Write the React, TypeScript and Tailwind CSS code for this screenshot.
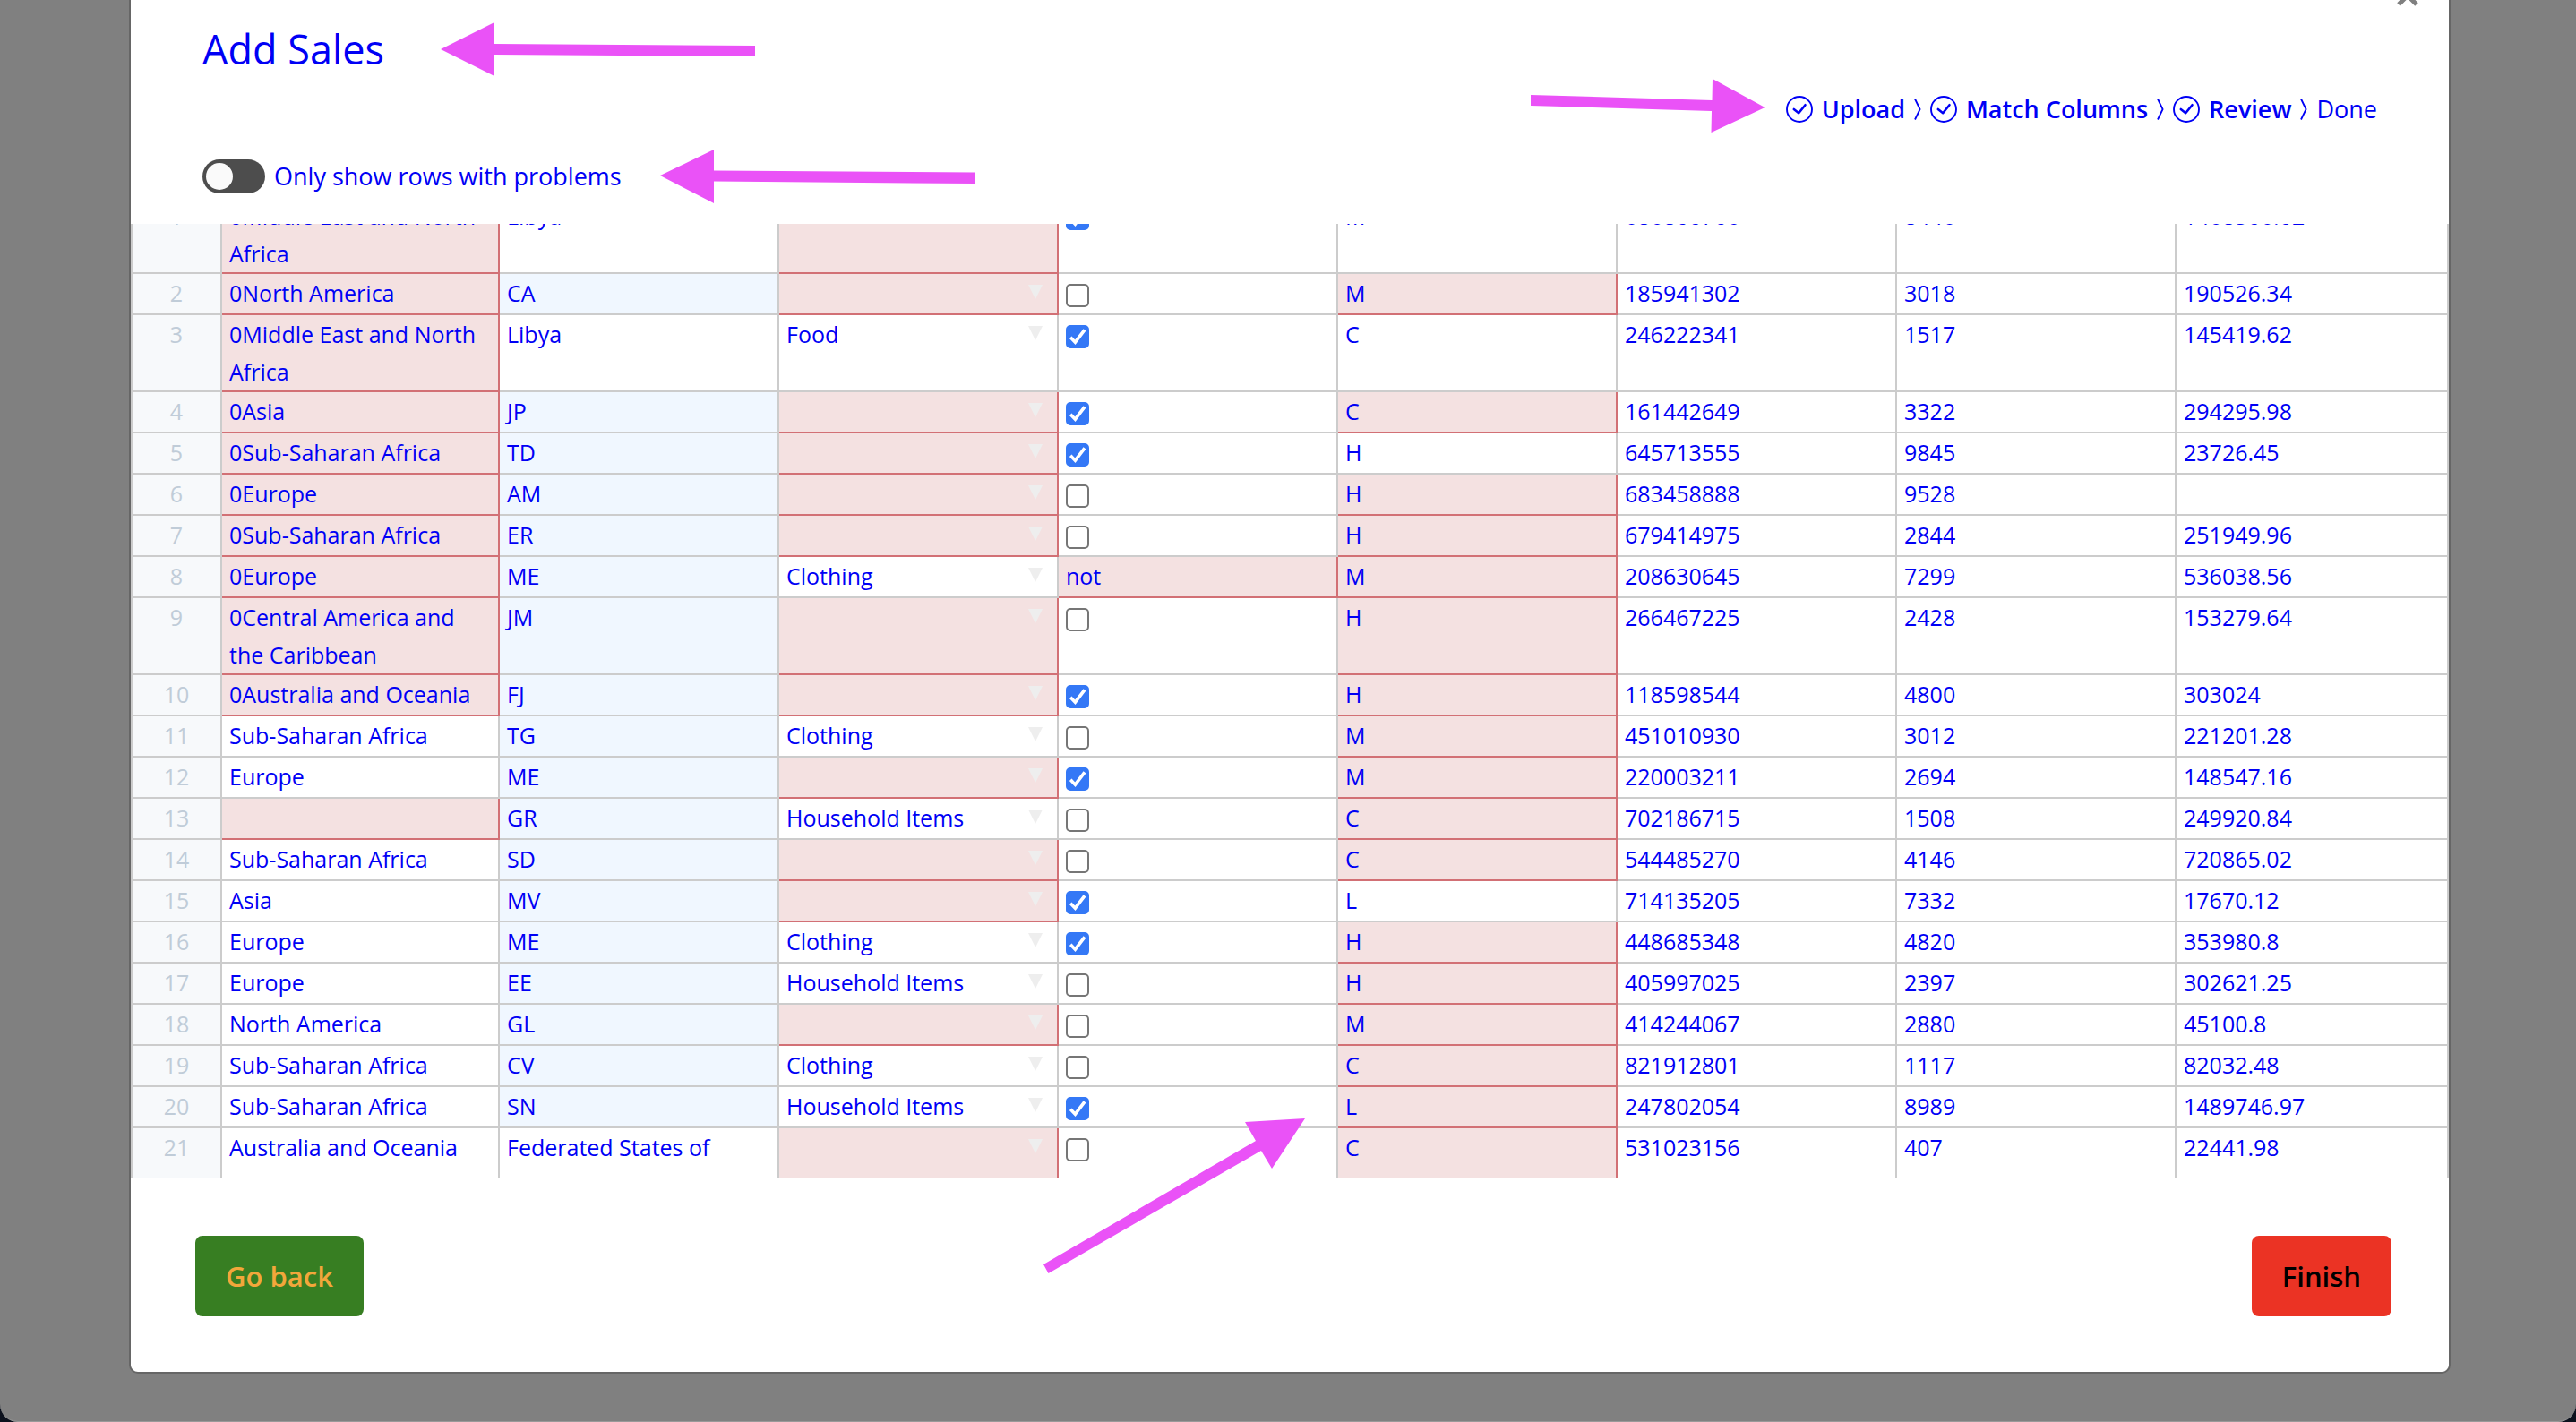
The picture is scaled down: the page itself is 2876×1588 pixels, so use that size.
import { useState } from "react";

type Row = {
  n: number;
  region: string;
  country: string;
  item: string;
  online: boolean | string;
  priority: string;
  order: string;
  units: string;
  profit: string;
  errors: string;
  plain?: boolean;
};

// errors: r = region, i = item, o = online, p = priority
const ROWS: Row[] = [
  { n: 1, region: "0Middle East and North Africa", country: "Libya", item: "", online: true, priority: "M", order: "686800706", units: "8446", profit: "1468506.02", errors: "ri", plain: true },
  { n: 2, region: "0North America", country: "CA", item: "", online: false, priority: "M", order: "185941302", units: "3018", profit: "190526.34", errors: "rip" },
  { n: 3, region: "0Middle East and North Africa", country: "Libya", item: "Food", online: true, priority: "C", order: "246222341", units: "1517", profit: "145419.62", errors: "r", plain: true },
  { n: 4, region: "0Asia", country: "JP", item: "", online: true, priority: "C", order: "161442649", units: "3322", profit: "294295.98", errors: "rip" },
  { n: 5, region: "0Sub-Saharan Africa", country: "TD", item: "", online: true, priority: "H", order: "645713555", units: "9845", profit: "23726.45", errors: "ri" },
  { n: 6, region: "0Europe", country: "AM", item: "", online: false, priority: "H", order: "683458888", units: "9528", profit: "", errors: "rip" },
  { n: 7, region: "0Sub-Saharan Africa", country: "ER", item: "", online: false, priority: "H", order: "679414975", units: "2844", profit: "251949.96", errors: "rip" },
  { n: 8, region: "0Europe", country: "ME", item: "Clothing", online: "not", priority: "M", order: "208630645", units: "7299", profit: "536038.56", errors: "rop" },
  { n: 9, region: "0Central America and the Caribbean", country: "JM", item: "", online: false, priority: "H", order: "266467225", units: "2428", profit: "153279.64", errors: "rip" },
  { n: 10, region: "0Australia and Oceania", country: "FJ", item: "", online: true, priority: "H", order: "118598544", units: "4800", profit: "303024", errors: "rip" },
  { n: 11, region: "Sub-Saharan Africa", country: "TG", item: "Clothing", online: false, priority: "M", order: "451010930", units: "3012", profit: "221201.28", errors: "p" },
  { n: 12, region: "Europe", country: "ME", item: "", online: true, priority: "M", order: "220003211", units: "2694", profit: "148547.16", errors: "ip" },
  { n: 13, region: "", country: "GR", item: "Household Items", online: false, priority: "C", order: "702186715", units: "1508", profit: "249920.84", errors: "rp" },
  { n: 14, region: "Sub-Saharan Africa", country: "SD", item: "", online: false, priority: "C", order: "544485270", units: "4146", profit: "720865.02", errors: "ip" },
  { n: 15, region: "Asia", country: "MV", item: "", online: true, priority: "L", order: "714135205", units: "7332", profit: "17670.12", errors: "i" },
  { n: 16, region: "Europe", country: "ME", item: "Clothing", online: true, priority: "H", order: "448685348", units: "4820", profit: "353980.8", errors: "p" },
  { n: 17, region: "Europe", country: "EE", item: "Household Items", online: false, priority: "H", order: "405997025", units: "2397", profit: "302621.25", errors: "p" },
  { n: 18, region: "North America", country: "GL", item: "", online: false, priority: "M", order: "414244067", units: "2880", profit: "45100.8", errors: "ip" },
  { n: 19, region: "Sub-Saharan Africa", country: "CV", item: "Clothing", online: false, priority: "C", order: "821912801", units: "1117", profit: "82032.48", errors: "p" },
  { n: 20, region: "Sub-Saharan Africa", country: "SN", item: "Household Items", online: true, priority: "L", order: "247802054", units: "8989", profit: "1489746.97", errors: "p" },
  { n: 21, region: "Australia and Oceania", country: "Federated States of Micronesia", item: "", online: false, priority: "C", order: "531023156", units: "407", profit: "22441.98", errors: "ip", plain: true },
];

const CELL = "border-r-2 border-b-2 px-2 text-left align-top font-normal ";
const OK = "border-[#cccccc]";
const BAD = "border-[#d27075] bg-[#f4e1e1]";

function tone(row: Row, key: string) {
  return CELL + (row.errors.includes(key) ? BAD : OK);
}

function ItemSelect({ value, n }: { value: string; n: number }) {
  return (
    <div className="grid items-start">
      <select
        aria-label={`Item type, row ${n}`}
        defaultValue={value}
        className="col-start-1 row-start-1 h-[42px] w-full appearance-none bg-transparent leading-[42px] outline-none"
      >
        <option value=""></option>
        <option>Clothing</option>
        <option>Food</option>
        <option>Household Items</option>
      </select>
      <svg className="pointer-events-none col-start-1 row-start-1 mt-3 mr-2 h-4 w-4 justify-self-end" viewBox="0 0 16 16" aria-hidden="true">
        <path d="M0 0H16L8 16Z" fill="#eeeeee" />
      </svg>
    </div>
  );
}

function Tick({ checked, n }: { checked: boolean; n: number }) {
  return (
    <span className="mt-[11px] grid h-[26px] w-[26px]">
      <input
        type="checkbox"
        aria-label={`Online, row ${n}`}
        defaultChecked={checked}
        className="peer col-start-1 row-start-1 h-[26px] w-[26px] appearance-none rounded-[5px] border-2 border-[#767676] bg-white checked:border-[#3478f6] checked:bg-[#3478f6]"
      />
      <svg className="pointer-events-none invisible col-start-1 row-start-1 h-[26px] w-[26px] peer-checked:visible" viewBox="0 0 26 26" fill="none" aria-hidden="true">
        <path d="M5.2 13.8 10.4 19.2 21 5.4" stroke="#fff" strokeWidth="3.6" />
      </svg>
    </span>
  );
}

function Grid({ rows }: { rows: Row[] }) {
  return (
    <div className="h-[1066px] overflow-hidden">
      <table className="-mt-[30px] w-full table-fixed border-separate border-spacing-0 text-[25px] leading-[42px]">
        <colgroup>
          <col className="w-[102px]" />
          <col className="w-[310px]" />
          <col className="w-[312px]" />
          <col className="w-[312px]" />
          <col className="w-[312px]" />
          <col className="w-[312px]" />
          <col className="w-[312px]" />
          <col className="w-[312px]" />
          <col />
        </colgroup>
        <tbody>
          {rows.map((row) => (
            <tr key={row.n} className="h-[46px]">
              <th scope="row" className="border-r-2 border-b-2 border-l-2 border-[#cccccc] bg-[#f7f9fb] px-2 text-center align-top font-normal text-[#c0ccd8]">
                {row.n}
              </th>
              <td className={tone(row, "r")}>{row.region}</td>
              <td className={CELL + (row.plain ? OK : "border-[#cccccc] bg-[#f0f7ff]")}>{row.country}</td>
              <td className={tone(row, "i")}>
                <ItemSelect value={row.item} n={row.n} />
              </td>
              <td className={tone(row, "o")}>
                {typeof row.online === "string" ? row.online : <Tick checked={row.online} n={row.n} />}
              </td>
              <td className={tone(row, "p")}>{row.priority}</td>
              <td className={CELL + OK}>{row.order}</td>
              <td className={CELL + OK}>{row.units}</td>
              <td className={CELL + OK}>{row.profit}</td>
            </tr>
          ))}
        </tbody>
      </table>
    </div>
  );
}

function Step({ label }: { label: string }) {
  return (
    <li className="flex items-center">
      <svg className="mr-[10px] h-[30px] w-[30px]" viewBox="0 0 30 30" fill="none" stroke="currentColor" aria-hidden="true">
        <circle cx="15" cy="15" r="14" strokeWidth="1.9" />
        <path d="M8.8 15 14.2 19.2 21.5 10.2" strokeWidth="2.6" strokeLinecap="round" strokeLinejoin="round" />
      </svg>
      <span className="font-semibold">{label}</span>
      <svg className="mx-[10px] h-6 w-2" viewBox="0 0 8 24" fill="none" stroke="currentColor" strokeWidth="1.8" aria-hidden="true">
        <path d="M1 0.5 6.6 12 1 23.5" />
      </svg>
    </li>
  );
}

function Arrows() {
  return (
    <svg className="pointer-events-none absolute top-0 left-0 h-[1588px] w-[2876px]" viewBox="0 0 2876 1588" fill="#ea52f7" aria-hidden="true">
      <path d="M492 55 552 25V49L843 51V63L552 61V85Z" />
      <path d="M737 196 797 167V190.5L1089 192.5V205L797 202.5V227Z" />
      <path d="M1970.5 120 1912 88 1911.5 112 1709 106V118L1911 124 1910.5 148Z" />
      <path d="M1457 1249 1390 1253 1402 1274 1165 1412 1170.5 1422 1408 1285 1420 1305Z" />
    </svg>
  );
}

export default function App() {
  const [onlyProblems, setOnlyProblems] = useState(false);
  const rows = onlyProblems ? ROWS.filter((r) => r.errors !== "") : ROWS;

  return (
    <div className="relative min-h-screen overflow-hidden bg-[#0c111d] font-['Open_Sans','Noto_Sans',sans-serif] text-[#0000f5]">
      <div className="min-h-screen rounded-b-[20px] border-b border-[#999999] bg-[#808080] pr-[140px] pl-[144px]">
        <main className="relative rounded-b-[10px] border-2 border-t-0 border-[#666666] bg-white">
          <button type="button" aria-label="Close" className="absolute -top-5 right-8 text-[#808080]">
            <svg className="h-[28px] w-[28px]" viewBox="0 0 28 28" fill="none" stroke="currentColor" strokeWidth="5" aria-hidden="true">
              <path d="M4 5 24 25M24 5 4 25" />
            </svg>
          </button>
          <header className="px-20 pt-5">
            <h1 className="text-[45px] leading-[70px]">Add Sales</h1>
            <ol className="flex items-center justify-end text-[27px] leading-[64px]">
              <Step label="Upload" />
              <Step label="Match Columns" />
              <Step label="Review" />
              <li>Done</li>
            </ol>
          </header>
          <div className="flex h-[96px] px-20 pt-[24px]">
            <label className="flex h-[38px] items-center gap-[10px] text-[27px] leading-[38px]">
              <span className="grid items-center">
                <input
                  type="checkbox"
                  role="switch"
                  checked={onlyProblems}
                  onChange={(e) => setOnlyProblems(e.target.checked)}
                  className="peer col-start-1 row-start-1 h-[38px] w-[70px] appearance-none rounded-full bg-[#4d4d4d]"
                />
                <span className="pointer-events-none col-start-1 row-start-1 ml-1 h-[30px] w-[30px] rounded-full bg-[#fafafa] peer-checked:ml-9" />
              </span>
              Only show rows with problems
            </label>
          </div>
          <Grid rows={rows} />
          <footer className="flex justify-between pt-16 pr-16 pb-[62px] pl-[72px] text-[31px] font-semibold">
            <button type="button" className="h-[90px] rounded-lg bg-[#377e22] px-[34px] text-[#f2a73b]">
              Go back
            </button>
            <button type="button" className="h-[90px] rounded-lg bg-[#eb3324] px-[34px] text-black">
              Finish
            </button>
          </footer>
        </main>
      </div>
      <Arrows />
    </div>
  );
}
